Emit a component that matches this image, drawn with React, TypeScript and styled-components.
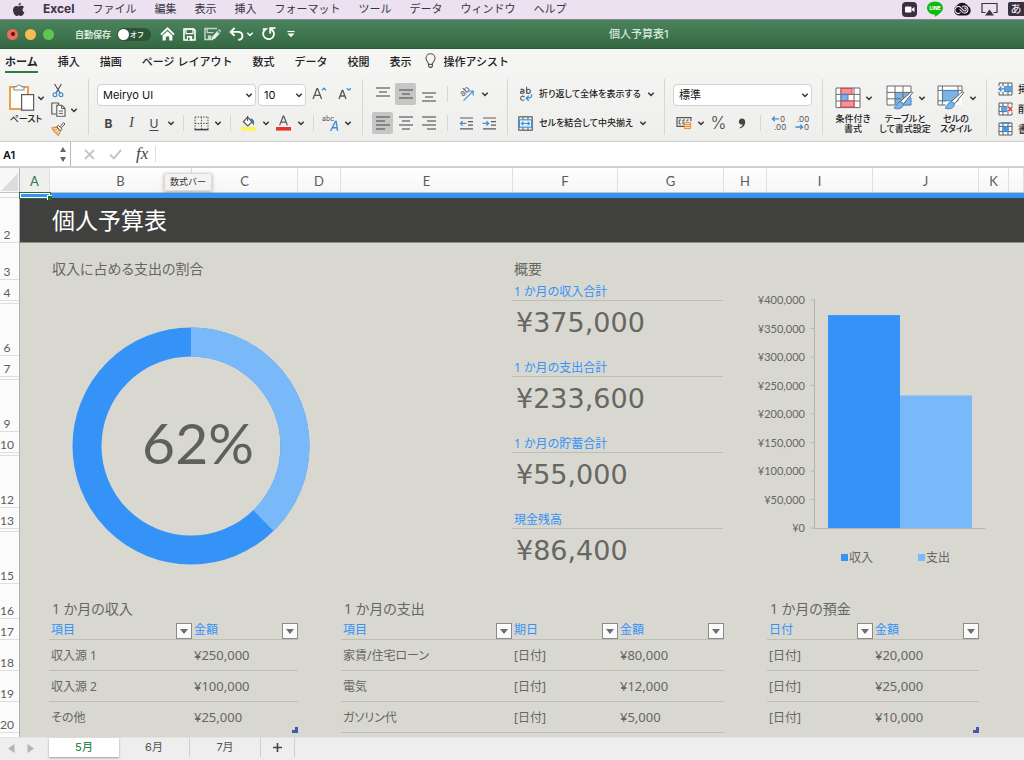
import React from "react";
import styled, { createGlobalStyle } from "styled-components";

const UI_FONT = `Inter, "Noto Sans CJK JP", sans-serif`;
const CELL_FONT = `"Noto Sans", "Noto Sans CJK JP", sans-serif`;
const GEO_FONT = `Lato, "Noto Sans CJK JP", sans-serif`;

const BLUE = "#3592f7";
const LIGHT_BLUE = "#7ab9f9";
const SHEET = "#d8d8d1";
const CELL_TEXT = "#666663";
const RULE = "#bebeb3";
const GREEN = "#2e7a47";

const GlobalStyle = createGlobalStyle`
  *, *::before, *::after { box-sizing: border-box; }
  body {
    margin: 0;
    overflow-x: hidden;
    background: #eeeeee;
    font-family: ${UI_FONT};
    color: #262626;
  }
  button, input, select { font: inherit; color: inherit; }
  svg { display: block; flex: none; overflow: visible; }
`;

const Page = styled.div`
  display: flex;
  flex-direction: column;
  min-height: 100vh;
  overflow: hidden;
`;

/* ---------- system menu bar ---------- */

const MenuBar = styled.header`
  display: flex;
  align-items: center;
  height: 20px;
  padding: 0 0 1px 12px;
  border-bottom: 1px solid #8b8391;
  background: #ebe1f1;
  font-size: 11px;
  line-height: 18px;
  white-space: nowrap;
`;

const MenuNav = styled.nav`
  display: flex;
  gap: 18px;
  margin-left: 18px;
`;

const MenuItem = styled.a<{ $bold?: boolean }>`
  color: #3a3340;
  text-decoration: none;
  font-size: ${(p) => (p.$bold ? 12 : 11)}px;
  font-weight: ${(p) => (p.$bold ? 700 : 400)};
`;

const StatusIcons = styled.div`
  display: flex;
  align-items: center;
  gap: 10px;
  margin-left: auto;
`;

const InputMode = styled.span`
  display: flex;
  justify-content: center;
  width: 16px;
  height: 14px;
  border-radius: 2px 0 0 2px;
  background: #3a3040;
  color: #fff;
  font-size: 11px;
  line-height: 14px;
`;

/* ---------- window title bar ---------- */

const TitleBar = styled.div`
  display: flex;
  align-items: center;
  height: 29px;
  border-bottom: 1px solid #2c5a39;
  background: linear-gradient(#4a845c, #356842);
  color: #fff;
`;

const TitleTools = styled.div`
  display: flex;
  align-items: center;
  flex: 0 0 609px;
  padding-left: 7px;
`;

const Lights = styled.div`
  display: flex;
  gap: 7px;
  width: 68px;
`;

const Light = styled.button<{ $color: string }>`
  display: flex;
  align-items: center;
  justify-content: center;
  width: 11px;
  height: 11px;
  padding: 0;
  border: 0;
  border-radius: 50%;
  background: ${(p) => p.$color};
`;

const LightDot = styled.span`
  width: 4px;
  height: 4px;
  border-radius: 50%;
  background: #5a0b06;
`;

const AutoSave = styled.label`
  display: flex;
  align-items: center;
  gap: 6px;
  font-size: 9px;
  font-weight: 700;
  line-height: 13px;
  color: #dbe8dd;
`;

const Toggle = styled.span`
  position: relative;
  display: flex;
  align-items: center;
  justify-content: flex-end;
  width: 34px;
  height: 13px;
  padding-right: 7px;
  border-radius: 7px;
  background: #2d5439;
  font-size: 7px;
  line-height: 13px;

  &::before {
    content: "";
    position: absolute;
    left: 1px;
    top: 1px;
    width: 11px;
    height: 11px;
    border-radius: 50%;
    background: #fff;
  }
`;

const HiddenCheck = styled.input`
  position: absolute;
  inset: 0;
  margin: 0;
  opacity: 0;
`;

const QuickTools = styled.div`
  display: flex;
  align-items: center;
  gap: 8px;
  margin-left: 9px;
`;

const UndoPair = styled.div`
  display: flex;
  align-items: center;
  gap: 2px;
`;

const PlainButton = styled.button`
  display: flex;
  align-items: center;
  justify-content: center;
  padding: 0;
  border: 0;
  background: none;
`;

const DocTitle = styled.h1`
  margin: 0;
  color: #d7e6da;
  font-size: 11px;
  font-weight: 500;
  line-height: 16px;
  white-space: nowrap;
`;

/* ---------- ribbon ---------- */

const TabRow = styled.div`
  display: flex;
  align-items: flex-start;
  gap: 14px;
  height: 25px;
  padding: 4px 0 0 5px;
  background: #f5f5f4;
  white-space: nowrap;
`;

const TabNav = styled.nav`
  display: flex;
  gap: 20px;
`;

const RibbonTab = styled.a<{ $active?: boolean }>`
  display: flex;
  gap: 7px;
  height: 20px;
  border-bottom: 2px solid ${(p) => (p.$active ? GREEN : "transparent")};
  color: #222;
  font-size: 11px;
  font-weight: ${(p) => (p.$active ? 700 : 500)};
  line-height: 18px;
  text-decoration: none;
`;

const Ribbon = styled.div`
  display: flex;
  height: 67px;
  padding-top: 5px;
  background: linear-gradient(#f4f4f3, #eeeeed);
`;

const Group = styled.section<{ $width: number; $pad: number }>`
  display: flex;
  flex-direction: column;
  flex: 0 0 ${(p) => p.$width}px;
  gap: 7px;
  height: 56px;
  padding: 4px 0 0 ${(p) => p.$pad}px;
  border-right: 1px solid #d6d6d5;
`;

const SplitGroup = styled(Group)`
  flex-direction: row;
  gap: 6px;
`;

const StylesGroup = styled(Group)`
  flex-direction: row;
  gap: 0;
`;

const ToolRow = styled.div<{ $gap?: number }>`
  display: flex;
  align-items: center;
  gap: ${(p) => p.$gap ?? 0}px;
  height: 22px;
`;

const Tool = styled.button<{ $width?: number; $on?: boolean }>`
  display: flex;
  align-items: center;
  justify-content: center;
  flex: none;
  width: ${(p) => p.$width ?? 21}px;
  height: 22px;
  padding: 0;
  border: 0;
  border-radius: 2px;
  background: ${(p) => (p.$on ? "#c6c6c5" : "none")};
`;

const Letter = styled.span<{ $kind: "bold" | "italic" | "underline" | "percent" }>`
  color: #444;
  font-size: ${(p) => (p.$kind === "percent" ? 17 : p.$kind === "italic" ? 14 : 12)}px;
  font-family: ${(p) => (p.$kind === "italic" ? `"Liberation Serif", serif` : UI_FONT)};
  font-weight: ${(p) => (p.$kind === "bold" ? 700 : p.$kind === "percent" ? 300 : 400)};
  font-style: ${(p) => (p.$kind === "italic" ? "italic" : "normal")};
  text-decoration: ${(p) => (p.$kind === "underline" ? "underline" : "none")};
  text-underline-offset: 2px;
`;

const Divider = styled.span`
  width: 1px;
  height: 16px;
  margin: 0 6px;
  background: #d6d6d5;
`;

const SelectBox = styled.label<{ $width: number }>`
  position: relative;
  display: block;
  width: ${(p) => p.$width}px;
  height: 22px;
`;

const NativeSelect = styled.select`
  width: 100%;
  height: 100%;
  padding: 0 16px 0 5px;
  border: 1px solid #d2d2d1;
  border-radius: 4px;
  background: #fff;
  color: #111;
  font-size: 11px;
  appearance: none;
`;

const SelectArrow = styled.span`
  position: absolute;
  right: 3px;
  top: 8px;
  pointer-events: none;
`;

const TextTool = styled.button`
  display: flex;
  align-items: center;
  gap: 6px;
  padding: 0;
  border: 0;
  background: none;
  color: #222;
  font-size: 9px;
  font-weight: 500;
  font-feature-settings: "palt";
  line-height: 22px;
  white-space: nowrap;
`;

const PasteButton = styled.button`
  display: flex;
  flex-direction: column;
  width: 41px;
  height: 45px;
  padding: 0;
  border: 0;
  background: none;
  font-size: 9px;
  font-weight: 500;
  font-feature-settings: "palt";
  line-height: 13px;
`;

const PasteTop = styled.span`
  display: flex;
  align-items: center;
  gap: 2px;
  padding-left: 4px;
`;

const PasteLabel = styled.span`
  padding-left: 3px;
`;

const ClipStack = styled.div`
  display: flex;
  flex-direction: column;
  gap: 4px;
`;

const ClipRow = styled.div`
  display: flex;
  align-items: center;
  gap: 4px;
  height: 15px;
`;

const StyleButton = styled.button<{ $width: number }>`
  display: flex;
  flex-direction: column;
  align-items: center;
  flex: none;
  gap: 4px;
  width: ${(p) => p.$width}px;
  height: 52px;
  padding: 2px 0 0;
  border: 0;
  background: none;
  color: #222;
  font-size: 9px;
  font-weight: 500;
  line-height: 10px;
  white-space: nowrap;
`;

const StyleTop = styled.span`
  display: flex;
  align-items: center;
  gap: 4px;
  height: 25px;
  padding-left: 2px;
`;

const StyleLabel = styled.span`
  font-feature-settings: "palt";
`;

const CellList = styled.section`
  display: flex;
  flex-direction: column;
  flex: 1 0 38px;
  gap: 5px;
  padding: 2px 0 0 11px;
  overflow: hidden;
`;

const CellButton = styled.button`
  display: flex;
  align-items: center;
  gap: 5px;
  height: 15px;
  padding: 0;
  border: 0;
  background: none;
  font-size: 10px;
  font-weight: 500;
  white-space: nowrap;
`;

/* ---------- formula bar ---------- */

const FormulaBar = styled.div`
  display: flex;
  height: 27px;
  border-top: 1px solid #cccccb;
  border-bottom: 2px solid #d0d0cf;
  background: #fff;
`;

const NameBox = styled.div`
  display: flex;
  align-items: center;
  width: 71px;
  padding-right: 3px;
  border-right: 1px solid #b9b9b8;
`;

const NameInput = styled.input`
  flex: 1;
  min-width: 0;
  padding: 2px 0 0 3px;
  border: 0;
  background: none;
  color: #111;
  font-size: 11px;
  font-weight: 600;
`;

const FormulaTools = styled.div`
  display: flex;
  align-items: center;
  gap: 14px;
  padding-left: 13px;
`;

const Fx = styled.span`
  color: #444;
  font-family: "Liberation Serif", serif;
  font-size: 17px;
  font-style: italic;
  font-weight: 400;
  line-height: 20px;
`;

const FormulaInput = styled.input`
  flex: 1;
  min-width: 0;
  height: 16px;
  margin: 4px 0 0 7px;
  border: 0;
  border-left: 1px solid #dededd;
  background: #fff;
`;

/* ---------- sheet ---------- */

const ColumnHeads = styled.div`
  position: relative;
  display: flex;
  height: 25px;
  border-bottom: 1px solid #c4c4c3;
  background: linear-gradient(#ffffff, #f6f6f6);
`;

const Corner = styled.button`
  display: flex;
  align-items: flex-end;
  justify-content: flex-end;
  width: 20px;
  padding: 0 1px 1px 0;
  border: 0;
  border-right: 1px solid #b9b9b8;
  background: #f7f7f7;
`;

const ColumnHead = styled.div<{ $width?: number; $active?: boolean }>`
  flex: ${(p) => (p.$width ? `0 0 ${p.$width}px` : "1 0 0")};
  border-right: 1px solid #e0e0df;
  background: ${(p) => (p.$active ? "#efefee" : "none")};
  color: ${(p) => (p.$active ? GREEN : "#5c5c5c")};
  font-family: ${GEO_FONT};
  font-size: 13px;
  line-height: 26px;
  text-align: center;
`;

const Tooltip = styled.div`
  position: absolute;
  left: 164px;
  top: 5px;
  padding: 0 5px;
  border: 1px solid #dcdcdb;
  background: #f3f3f2;
  box-shadow: 0 1px 4px rgba(0, 0, 0, 0.3);
  color: #333;
  font-size: 9px;
  line-height: 16px;
`;

const SheetBody = styled.div`
  display: flex;
  flex: 1;
`;

const RowHeads = styled.div`
  flex: 0 0 20px;
  width: 20px;
  border-right: 1px solid #b0b0ae;
  background: #fbfbfb;
`;

const RowHead = styled.div<{ $height: number }>`
  display: flex;
  align-items: flex-end;
  justify-content: center;
  height: ${(p) => p.$height}px;
  padding-right: 5px;
  border-bottom: 1px solid #dededd;
  color: #5c5c5c;
  font-family: ${GEO_FONT};
  font-size: 12px;
  line-height: 14px;
`;

const Cells = styled.main`
  flex: 1;
  min-width: 0;
  background: ${SHEET};
  color: ${CELL_TEXT};
  font-family: ${CELL_FONT};
`;

const AccentRow = styled.div`
  position: relative;
  height: 5px;
  background: ${BLUE};
`;

const Selection = styled.div`
  position: absolute;
  left: -1px;
  top: -1px;
  width: 32px;
  height: 7px;
  border: 1px solid #24713e;
  box-shadow: inset 0 0 0 1px #fff;

  &::after {
    content: "";
    position: absolute;
    right: -2px;
    bottom: -2px;
    width: 5px;
    height: 5px;
    border: 1px solid #fff;
    border-width: 1px 0 0 1px;
    background: #24713e;
  }
`;

const SheetTitle = styled.h2`
  height: 45px;
  margin: 0;
  padding-left: 32px;
  border-bottom: 1px solid #8d8d89;
  background: #40403f;
  color: #fff;
  font-size: 23px;
  font-weight: 400;
  line-height: 44px;
`;

const Dashboard = styled.div`
  display: flex;
  height: 341px;
`;

const RatioPanel = styled.section`
  flex: 0 0 492px;
  padding-left: 32px;
`;

const SummaryPanel = styled.section`
  flex: 0 0 211px;
`;

const ChartPanel = styled.section`
  flex: 1;
  padding-top: 37px;
  overflow: hidden;
`;

const PanelTitle = styled.h3<{ $indent?: number }>`
  height: 37px;
  margin: 0;
  padding: 15px 0 0 ${(p) => p.$indent ?? 0}px;
  font-size: 14px;
  font-weight: 400;
  font-feature-settings: "palt";
  line-height: 22px;
`;

const DonutWrap = styled.div`
  padding: 47px 0 0 20px;
`;

const Stat = styled.dl`
  height: 76px;
  margin: 0;
`;

const StatName = styled.dt`
  height: 21px;
  padding-left: 2px;
  border-bottom: 1px solid ${RULE};
  color: ${BLUE};
  font-size: 12px;
  font-feature-settings: "palt";
  line-height: 24px;
`;

const StatValue = styled.dd`
  margin: 0;
  padding-left: 4px;
  font-family: "DejaVu Sans", sans-serif;
  font-size: 27px;
  line-height: 44px;
`;

const Tables = styled.div`
  display: flex;
  gap: 43px;
  padding-left: 29px;
`;

const TableTitle = styled.caption`
  height: 35px;
  padding: 14px 0 0 3px;
  font-size: 14px;
  font-feature-settings: "palt";
  line-height: 21px;
  text-align: left;
`;

const TableBox = styled.div`
  position: relative;
`;

const Table = styled.table<{ $width: number }>`
  width: ${(p) => p.$width}px;
  border-collapse: separate;
  border-spacing: 0;
  table-layout: fixed;
`;

const HeadCell = styled.th<{ $width: number }>`
  width: ${(p) => p.$width}px;
  height: 21px;
  padding: 0 0 0 2px;
  border-bottom: 1px solid ${RULE};
  color: ${BLUE};
  font-size: 12px;
  font-weight: 400;
  line-height: 22px;
  text-align: left;
`;

const HeadInner = styled.div`
  display: flex;
  align-items: flex-start;
  justify-content: space-between;
  height: 20px;
`;

const FilterButton = styled.button`
  display: flex;
  align-items: center;
  justify-content: center;
  width: 16px;
  height: 16px;
  margin-top: 4px;
  padding: 0;
  border: 1px solid #8a8a86;
  background: #fafafa;
`;

const Cell = styled.td<{ $line: boolean; $money: boolean }>`
  height: 31px;
  padding: ${(p) => (p.$money ? 0 : 2)}px 0 0 2px;
  border-bottom: 1px solid ${(p) => (p.$line ? RULE : "transparent")};
  font-size: ${(p) => (p.$money ? 13 : 12)}px;
  font-feature-settings: "palt";
  line-height: 28px;
`;

const TableCorner = styled.span`
  position: absolute;
  right: 0;
  bottom: 0;
  width: 6px;
  height: 6px;
  background: #4258b0;

  &::before {
    content: "";
    position: absolute;
    left: 0;
    top: 0;
    width: 3px;
    height: 3px;
    background: ${SHEET};
  }
`;

/* ---------- sheet tabs ---------- */

const TabBar = styled.footer`
  display: flex;
  align-items: flex-start;
  height: 23px;
  border-top: 1px solid #e3e3e0;
  background: #eeeeee;
`;

const TabArrows = styled.div`
  display: flex;
  gap: 12px;
  width: 49px;
  padding: 6px 0 0 7px;
`;

const SheetTab = styled.button<{ $active?: boolean }>`
  width: ${(p) => (p.$active ? 70 : 71)}px;
  height: 19px;
  padding: 0;
  border: 0;
  border-right: ${(p) => (p.$active ? "0" : "1px solid #cfcfce")};
  background: ${(p) => (p.$active ? "#fff" : "none")};
  box-shadow: ${(p) => (p.$active ? "0 1px 2px rgba(0, 0, 0, 0.35)" : "none")};
  color: ${(p) => (p.$active ? "#2f8a4c" : "#555")};
  font-size: 11px;
  font-weight: ${(p) => (p.$active ? 500 : 400)};
  line-height: 19px;
`;

const AddTab = styled.button`
  display: flex;
  align-items: center;
  justify-content: center;
  width: 34px;
  height: 19px;
  padding: 0;
  border: 0;
  border-right: 1px solid #cfcfce;
  background: none;
`;

/* ---------- icons ---------- */

const Icon = ({ w, h, children }: { w: number; h: number; children: React.ReactNode }) => (
  <svg width={w} height={h} viewBox={`0 0 ${w} ${h}`} fill="none" aria-hidden="true">
    {children}
  </svg>
);

const Chevron = ({ color = "#333" }: { color?: string }) => (
  <Icon w={8} h={8}>
    <path d="M1.3 2.8L4 5.5L6.7 2.8" stroke={color} strokeWidth="1.5" />
  </Icon>
);

const AppleLogo = () => (
  <Icon w={13} h={15}>
    <path
      d="M8.9 0.8C9 2.2 7.7 3.6 6.4 3.6C6.3 2.2 7.5 1 8.9 0.8ZM6.6 4.5C7.2 4.5 8 3.8 9.3 3.8C10.4 3.8 11.4 4.3 12 5.2C9.9 6.4 10.2 9.4 12.4 10.3C11.8 12 10.6 14 9.3 14C8.4 14 8 13.5 6.9 13.5C5.8 13.5 5.3 14 4.5 14C2.9 14 1 10.8 1 8.1C1 5.4 2.7 3.9 4.4 3.9C5.4 3.9 6.1 4.5 6.6 4.5Z"
      fill="#3a3040"
    />
  </Icon>
);

const CameraIcon = () => (
  <Icon w={15} h={15}>
    <rect x="0" y="0" width="15" height="15" rx="4" fill="#3a3040" />
    <rect x="3" y="4.5" width="6.5" height="6" rx="1" fill="#fff" />
    <path d="M10 6.8L12.5 5V10L10 8.3Z" fill="#fff" />
  </Icon>
);

const LineIcon = () => (
  <svg width="16" height="16" viewBox="0 0 16 16" role="img" aria-label="LINE">
    <path d="M8 0.5C12.4 0.5 16 3.3 16 6.9C16 10.4 11.5 13.4 8.4 15.6C7.6 16 7.9 14.8 7.8 13.6C3.5 13.5 0 10.6 0 6.9C0 3.3 3.6 0.5 8 0.5Z" fill="#12b90e" />
    <text x="8" y="8.6" textAnchor="middle" fontFamily="Inter, sans-serif" fontSize="5" fontWeight="800" fill="#fff">
      LINE
    </text>
  </svg>
);

const CloudIcon = () => (
  <Icon w={18} h={14}>
    <path d="M5.4 13.4A5.2 5.2 0 0 1 3.6 3.8A6.8 6.8 0 0 1 15 4A5 5 0 0 1 12.6 13.4Z" fill="#17121c" />
    <g stroke="#ebe1f1" strokeWidth="1.1">
      <path d="M7.6 10.6A3.4 3.4 0 1 1 7.8 5.6L10 7.8" />
      <path d="M6.6 7.4L9.6 10.4A3.4 3.4 0 0 0 15 7.6A3.6 3.6 0 0 0 9 5" />
      <path d="M9.4 7.2L11 8.8A1.5 1.5 0 1 0 11 6.2" />
    </g>
  </Icon>
);

const AirplayIcon = () => (
  <Icon w={17} h={14}>
    <path d="M4.5 10.5H1V1.5H16V10.5H12.5" stroke="#3a3040" strokeWidth="1.2" />
    <path d="M8.5 7.5L13 13.5H4Z" fill="#3a3040" />
  </Icon>
);

const HomeIcon = () => (
  <Icon w={15} h={14}>
    <path d="M1 7.6L7.5 1.4L14 7.6" stroke="#fff" strokeWidth="2" />
    <path d="M2.6 8.6L7.5 4.2L12.4 8.6V13.6H9.2V9.6H5.8V13.6H2.6Z" fill="#fff" />
  </Icon>
);

const SaveIcon = () => (
  <Icon w={13} h={13}>
    <path d="M1 1H10.6L12 2.4V12H1Z" stroke="#fff" strokeWidth="1.6" />
    <path d="M3 1H10V5.6H3Z" stroke="#fff" strokeWidth="1.2" />
    <path d="M3.8 8H9.2V12.4H3.8Z" fill="#fff" />
    <rect x="5" y="9.4" width="1.6" height="3" fill="#3d7049" />
  </Icon>
);

const SavePenIcon = () => (
  <Icon w={17} h={14}>
    <path d="M9 12.5H1V1.5H13" stroke="#c3d6c8" strokeWidth="1.5" />
    <path d="M3.2 2V5.6H9.5" stroke="#c3d6c8" strokeWidth="1.3" />
    <path d="M3.8 8.4H7.4V12.5H3.8Z" fill="#c3d6c8" />
    <path d="M7.4 13L8.4 9.4L13.4 3.8L16 6.2L11 11.8Z" fill="#e4ede6" />
    <path d="M14.2 3L15 2.2L17 4L16.4 5" fill="#e4ede6" />
    <path d="M13 4.6L15.4 6.8" stroke="#3d7049" strokeWidth="0.7" />
  </Icon>
);

const UndoIcon = () => (
  <Icon w={15} h={14}>
    <path d="M5.6 1L1.6 4.9L5.6 8.8" stroke="#fff" strokeWidth="1.9" />
    <path d="M2 4.9H8.6C11.8 4.9 13.4 6.8 13.4 9C13.4 11.4 11.6 12.8 9.2 12.8" stroke="#fff" strokeWidth="1.9" />
  </Icon>
);

const RedoIcon = () => (
  <Icon w={14} h={14}>
    <path d="M0.8 2.2H3.6C1.6 3.6 1 5.4 1.1 7.2A5.5 5.5 0 0 0 12 7.4C12 5 10.8 3.2 8.6 1.8" stroke="#fff" strokeWidth="1.8" />
    <path d="M13.4 1.2H8.2V6.4" stroke="#fff" strokeWidth="1.8" />
  </Icon>
);

const CustomizeIcon = () => (
  <Icon w={14} h={8}>
    <path d="M3.5 1.5H10.5" stroke="#fff" strokeWidth="1.2" />
    <path d="M3.5 3.6H10.5L7 7.2Z" fill="#fff" />
  </Icon>
);

const BulbIcon = () => (
  <Icon w={11} h={16}>
    <path d="M3.6 11.4C3.6 9 1 8.4 1 5.3A4.5 4.5 0 0 1 10 5.3C10 8.4 7.4 9 7.4 11.4Z" stroke="#555" strokeWidth="1.1" />
    <path d="M3.6 11.4V13.2L4.6 14.4H6.4L7.4 13.2V11.4" stroke="#555" strokeWidth="1.1" />
  </Icon>
);

const PasteIcon = () => (
  <Icon w={27} h={29}>
    <path d="M7 4H2V26H13" stroke="#e8a04a" strokeWidth="2" />
    <path d="M15 4H20V11" stroke="#e8a04a" strokeWidth="2" />
    <path d="M3.2 5.2H19V11H12.6V24.8H3.2Z" fill="#fdfdfc" />
    <path d="M6 7V3.6H8.6A2.6 2.6 0 0 1 13.4 3.6H16V7Z" fill="#fff" stroke="#8b8b8a" strokeWidth="1.1" />
    <rect x="13.6" y="11.6" width="12" height="15.6" fill="#fff" stroke="#5a5a5a" strokeWidth="1.2" />
  </Icon>
);

const CutIcon = () => (
  <Icon w={14} h={15}>
    <path d="M3.6 1L9 10M10.4 1L5 10" stroke="#555" strokeWidth="1.2" />
    <circle cx="4" cy="11.8" r="1.9" stroke="#3f8fd2" strokeWidth="1.2" />
    <circle cx="10" cy="11.8" r="1.9" stroke="#3f8fd2" strokeWidth="1.2" />
  </Icon>
);

const CopyIcon = () => (
  <Icon w={15} h={15}>
    <path d="M5.5 12H0.8V1H7.6V3" stroke="#555" strokeWidth="1.1" />
    <path d="M5.8 3.2H10.8L14 6.4V14.2H5.8Z" fill="#fff" stroke="#555" strokeWidth="1.1" />
    <path d="M10.6 3.4V6.6H14M7.8 9H12M7.8 11.4H12" stroke="#555" />
  </Icon>
);

const BrushIcon = () => (
  <Icon w={15} h={15}>
    <path d="M1 7L5.6 6L9.4 10.2L7.4 14.2C4.8 12.4 2.6 10.4 1 7Z" fill="#f9e0c3" stroke="#e58f3c" strokeWidth="1.3" />
    <path d="M2.8 9.2L6 8.4M5 11.8L7.6 10" stroke="#e58f3c" />
    <path d="M5.8 5.8L7.4 4.4L11 8.2L9.5 9.9Z" fill="#fff" stroke="#555" />
    <path d="M9 5.8L12.6 1.6L14 3L10 6.8" fill="#fff" stroke="#555" />
  </Icon>
);

const FontSizeIcon = ({ up }: { up: boolean }) => (
  <Icon w={15} h={16}>
    <path d={up ? "M1 13L5 2.6H5.6L9.6 13M2.5 9.4H8.1" : "M2 13L5.2 4.4H5.8L9 13M3.2 10H7.8"} stroke="#555" strokeWidth="1.3" />
    <path d={up ? "M10 4.2L12 2.2L14 4.2" : "M9.8 2.2L11.8 4.2L13.8 2.2"} stroke="#3f8fd2" strokeWidth="1.3" />
  </Icon>
);

const BorderIcon = () => (
  <Icon w={15} h={15}>
    <path d="M1 1H14M1 7.5H14M1 1V13M14 1V13M7.5 1V13" stroke="#555" strokeDasharray="1.5 1.2" />
    <path d="M0.5 13.6H14.5" stroke="#444" strokeWidth="1.6" />
  </Icon>
);

const FillIcon = () => (
  <Icon w={15} h={16}>
    <path d="M6.6 2.2L11 6.8L6.8 11L2.4 6.8Z" fill="#fff" stroke="#555" strokeWidth="1.2" />
    <path d="M6.6 6V1" stroke="#555" strokeWidth="1.1" />
    <path d="M10 3.8C12.4 4.4 13 6.6 12.6 9.6C11 8.6 11.8 6.4 10 3.8Z" fill="#3f6fa8" stroke="#3f6fa8" />
    <rect x="0" y="12" width="15" height="3.6" fill="#fdf551" />
  </Icon>
);

const FontColorIcon = () => (
  <Icon w={15} h={16}>
    <path d="M3.6 10.4L7.2 1.2H7.8L11.4 10.4M4.9 7.2H10.1" stroke="#555" strokeWidth="1.2" />
    <rect x="0" y="12" width="15" height="3.6" fill="#e8352b" />
  </Icon>
);

const PhoneticIcon = () => (
  <svg width="18" height="17" viewBox="0 0 18 17" aria-hidden="true">
    <text x="0" y="6" fontFamily="Inter, sans-serif" fontSize="7" fill="#555">
      abc
    </text>
    <path d="M8.6 16L13.4 6.4H14.2L15.6 16M10.2 12.8H15" stroke="#3f8fd2" strokeWidth="1.4" fill="none" />
  </svg>
);

const LinesIcon = ({ rows }: { rows: [number, number, number][] }) => (
  <Icon w={14} h={14}>
    {rows.map(([x1, x2, y]) => (
      <path key={y} d={`M${x1} ${y}H${x2}`} stroke="#5c5c5c" strokeWidth="1.2" />
    ))}
  </Icon>
);

const OrientationIcon = () => (
  <svg width="17" height="16" viewBox="0 0 17 16" aria-hidden="true">
    <text x="0" y="0" transform="translate(5 11) rotate(-45)" fontFamily="Inter, sans-serif" fontSize="9" fill="#555">
      ab
    </text>
    <path d="M5.6 14.6L15 5.2M10.6 5H15.2V9.6" stroke="#3f8fd2" strokeWidth="1.2" fill="none" />
  </svg>
);

const IndentIcon = ({ out }: { out: boolean }) => (
  <Icon w={15} h={13}>
    <path d="M1 1H14M9 4.6H14M9 8.2H14M1 11.8H14" stroke="#5c5c5c" strokeWidth="1.2" />
    <path d={out ? "M7.4 6.4H1.4M3.6 4.2L1.4 6.4L3.6 8.6" : "M0.6 6.4H6.6M4.4 4.2L6.6 6.4L4.4 8.6"} stroke="#3f8fd2" strokeWidth="1.3" />
  </Icon>
);

const WrapIcon = () => (
  <Icon w={15} h={16}>
    <g stroke="#555" strokeWidth="1.1">
      <path d="M2.6 4C3.4 2.8 6 2.8 6 4.6V7.4M6 5.2C4 5 2.4 5.4 2.4 6.4C2.4 7.8 5.4 7.6 6 6" />
      <path d="M8.6 0.8V7.4" />
      <ellipse cx="10.4" cy="5.3" rx="1.9" ry="2.1" />
      <path d="M6.4 10.8C5 9.6 2.6 10 2.6 12.2C2.6 14.4 5 14.8 6.4 13.6" />
    </g>
    <path d="M13.4 8.2C14.6 11 12.6 12.4 8.4 12.2M10.8 9.6L8.2 12.2L10.8 14.8" stroke="#3f8fd2" strokeWidth="1.3" />
  </Icon>
);

const MergeIcon = () => (
  <Icon w={15} h={15}>
    <rect x="0.8" y="0.8" width="13.4" height="13.4" stroke="#555" strokeWidth="1.1" />
    <path d="M5 1V3.6M10 1V3.6M5 11.4V14M10 11.4V14" stroke="#555" />
    <rect x="1.4" y="3.8" width="12.2" height="7.4" fill="#e6f2fc" stroke="#3f8fd2" strokeWidth="1.1" />
    <path d="M3.4 7.5H11.6M5.4 5.6L3.4 7.5L5.4 9.4M9.6 5.6L11.6 7.5L9.6 9.4" stroke="#3f8fd2" strokeWidth="1.1" />
  </Icon>
);

const CurrencyIcon = () => (
  <Icon w={16} h={14}>
    <path d="M8 10.4H1V1.6H15V5" stroke="#555" strokeWidth="1.2" />
    <path d="M5 4H3.2V8H5M9 4H7V8H8.4M12.6 4H11V5.4" stroke="#555" />
    <path d="M8.4 6.6H14.6V12.6H8.4Z" fill="#fbe3c8" stroke="#e58f3c" />
    <path d="M8.4 8.6H14.6M8.4 10.6H14.6" stroke="#e58f3c" />
  </Icon>
);

const CommaIcon = () => (
  <Icon w={8} h={11}>
    <path d="M4 0.6C6.2 0.6 7.3 2.1 7.2 4.2C7.1 7.4 5 9.6 2 10.4L1.6 9.5C3.4 8.7 4.4 7.8 4.6 6.5C2.4 6.9 0.9 5.6 0.9 3.7C0.9 1.9 2.2 0.6 4 0.6Z" fill="#444" />
  </Icon>
);

const DecimalIcon = ({ more }: { more: boolean }) => (
  <svg width="16" height="17" viewBox="0 0 16 17" aria-hidden="true" fill="none">
    <text x={more ? 9 : 3} y="7" fontFamily="Inter, sans-serif" fontSize="8" fill="#555">
      {more ? "0" : ".00"}
    </text>
    <text x={more ? 3 : 10} y="15" fontFamily="Inter, sans-serif" fontSize="8" fill="#555">
      {more ? ".00" : "0"}
    </text>
    <path
      d={more ? "M8 3.8H1.4M3.8 1.4L1.4 3.8L3.8 6.2" : "M1.4 12H8.6M6.2 9.6L8.6 12L6.2 14.4"}
      stroke="#3f8fd2"
      strokeWidth="1.3"
    />
  </svg>
);

const ConditionalIcon = () => (
  <Icon w={26} h={22}>
    <rect x="1" y="1" width="24" height="19.6" fill="#fff" />
    <path d="M1 1H25V20.6H1ZM1 7.4H25M1 14H25M6 1V20.6M19 1V20.6" stroke="#6a6a6a" />
    <rect x="6" y="1.4" width="11" height="5.8" fill="#f0959a" stroke="#d8444a" />
    <rect x="6" y="7.6" width="7" height="6" fill="#7fb2e2" stroke="#3f84c6" />
    <rect x="6" y="14" width="13" height="6" fill="#f0959a" stroke="#d8444a" />
  </Icon>
);

const PaintBrush = () => (
  <>
    <path d="M26.8 7.6L17.4 19L14.2 16.6L23.6 8.2C25 7 26.2 6.4 26.8 7.6Z" fill="#fff" stroke="#5a5a5a" />
    <path d="M14 16.8C16.4 16.8 17.8 18.4 17.2 20.4C16.2 23.4 11.8 24.8 8 23C10.6 22 10.4 17.2 14 16.8Z" fill="#7fb2e2" stroke="#3f84c6" />
  </>
);

const TableStyleIcon = () => (
  <Icon w={28} h={25}>
    <rect x="1" y="1" width="24" height="19" fill="#fff" />
    <rect x="9" y="7.4" width="16" height="13" fill="#7fb2e2" />
    <path d="M9 20H1V1H25V8M1 7.4H25M1 13.8H15M9 1V20M17 1V13" stroke="#6a6a6a" />
    <path d="M17 20H25V13" stroke="#3f84c6" />
    <PaintBrush />
  </Icon>
);

const CellStyleIcon = () => (
  <Icon w={28} h={25}>
    <rect x="1" y="1" width="24" height="19" fill="#fff" />
    <path d="M9 20H1V1H25V8M1 5.4H25M5.4 1V20M1 15.8H9M21 1V8" stroke="#6a6a6a" />
    <rect x="5.6" y="5.6" width="15.4" height="10.2" fill="#7fb2e2" stroke="#3f84c6" />
    <PaintBrush />
  </Icon>
);

const CellOpIcon = ({ kind }: { kind: "insert" | "delete" | "format" }) => (
  <Icon w={15} h={14}>
    <path d="M1 1H14V13H1ZM1 4.4H14M1 9.6H14M5 1V13M10 1V13" stroke="#5a5a5a" fill="#fff" />
    {kind === "insert" && (
      <>
        <rect x="0" y="4" width="6" height="6" fill="#f2f2f1" />
        <rect x="6" y="4.2" width="8.4" height="5.4" fill="#5aa3e6" />
        <path d="M7 6.9H1M3.4 4.6L1 6.9L3.4 9.2" stroke="#3f84c6" strokeWidth="1.3" />
      </>
    )}
    {kind === "delete" && (
      <>
        <rect x="3" y="4.4" width="6" height="5" fill="#5aa3e6" />
        <rect x="9.6" y="3.6" width="5.6" height="6.8" fill="#f2f2f1" />
        <path d="M10.2 4.8L14.2 9.2M14.2 4.8L10.2 9.2" stroke="#e03a35" strokeWidth="1.4" />
      </>
    )}
    {kind === "format" && (
      <>
        <path d="M3 1H12" stroke="#3f84c6" strokeWidth="1.4" />
        <rect x="4" y="4.6" width="7" height="5" fill="#4a98e2" />
      </>
    )}
  </Icon>
);

/* ---------- data ---------- */

const MENUS = ["ファイル", "編集", "表示", "挿入", "フォーマット", "ツール", "データ", "ウィンドウ", "ヘルプ"];
const TABS = ["ホーム", "挿入", "描画", "ページ レイアウト", "数式", "データ", "校閲", "表示"];

const COLUMNS: [string, number?][] = [
  ["A", 30],
  ["B", 142],
  ["C", 106],
  ["D", 43],
  ["E", 172],
  ["F", 105],
  ["G", 106],
  ["H", 43],
  ["I", 106],
  ["J", 106],
  ["K", 30],
  [""],
];

const ROWS: [string, number][] = [
  ["", 5],
  ["2", 45],
  ["3", 37],
  ["4", 21],
  ["", 3],
  ["6", 52],
  ["7", 21],
  ["", 3],
  ["9", 52],
  ["10", 21],
  ["", 3],
  ["12", 52],
  ["13", 21],
  ["", 3],
  ["15", 52],
  ["16", 35],
  ["17", 21],
  ["18", 31],
  ["19", 31],
  ["20", 31],
];

const STATS: [string, string][] = [
  ["1 か月の収入合計", "¥375,000"],
  ["1 か月の支出合計", "¥233,600"],
  ["1 か月の貯蓄合計", "¥55,000"],
  ["現金残高", "¥86,400"],
];

type TableData = { title: string; heads: [string, number][]; rows: string[][]; last: boolean };

const TABLES: TableData[] = [
  {
    title: "1 か月の収入",
    heads: [["項目", 143], ["金額", 106]],
    rows: [["収入源 1", "¥250,000"], ["収入源 2", "¥100,000"], ["その他", "¥25,000"]],
    last: true,
  },
  {
    title: "1 か月の支出",
    heads: [["項目", 171], ["期日", 106], ["金額", 106]],
    rows: [
      ["家賃/住宅ローン", "[日付]", "¥80,000"],
      ["電気", "[日付]", "¥12,000"],
      ["ガソリン代", "[日付]", "¥5,000"],
    ],
    last: false,
  },
  {
    title: "1 か月の預金",
    heads: [["日付", 106], ["金額", 106]],
    rows: [["[日付]", "¥20,000"], ["[日付]", "¥25,000"], ["[日付]", "¥10,000"]],
    last: true,
  },
];

/* ---------- parts ---------- */

const Donut = () => {
  const r = 104;
  const length = 2 * Math.PI * r;
  const spare = length * 0.377;
  return (
    <svg width="238" height="238" viewBox="0 0 238 238" role="img" aria-label="収入に占める支出の割合 62%">
      <g transform="rotate(-90 119 119)" fill="none" strokeWidth="29">
        <circle cx="119" cy="119" r={r} stroke={BLUE} />
        <circle cx="119" cy="119" r={r} stroke={LIGHT_BLUE} strokeDasharray={`${spare} ${length}`} />
      </g>
      <text x="126" y="137" textAnchor="middle" fontFamily="Lato, sans-serif" fontSize="57" fill="#5f5f5d">
        62%
      </text>
    </svg>
  );
};

const BarChart = () => {
  const ticks = [400, 350, 300, 250, 200, 150, 100, 50, 0];
  const y = (v: number) => 248 - (v / 400) * 228;
  return (
    <svg width="270" height="300" viewBox="0 0 270 300" role="img" aria-label="収入と支出">
      {ticks.map((t) => (
        <g key={t}>
          <text x="82" y={y(t) + 4} textAnchor="end" fontFamily="Lato, sans-serif" fontSize="11" fill={CELL_TEXT}>
            {t ? `¥${t},000` : "¥0"}
          </text>
          <path d={`M88 ${y(t)}H92`} stroke="#b4b4aa" />
        </g>
      ))}
      <rect x="105" y={y(373.5)} width="72" height={248 - y(373.5)} fill={BLUE} />
      <rect x="177" y={y(232.5)} width="72" height={248 - y(232.5)} fill={LIGHT_BLUE} />
      <path d="M91.5 20V248.5H262" stroke="#b4b4aa" fill="none" />
      <rect x="118" y="274" width="7" height="7" fill={BLUE} />
      <rect x="195" y="274" width="7" height="7" fill={LIGHT_BLUE} />
      <g fontFamily='"Noto Sans CJK JP", sans-serif' fontSize="12" fill={CELL_TEXT}>
        <text x="126" y="282">収入</text>
        <text x="203" y="282">支出</text>
      </g>
    </svg>
  );
};

const Picker = ({ label, value, width }: { label: string; value: string; width: number }) => (
  <SelectBox $width={width}>
    <NativeSelect aria-label={label} defaultValue={value}>
      <option>{value}</option>
    </NativeSelect>
    <SelectArrow>
      <Chevron />
    </SelectArrow>
  </SelectBox>
);

const Drop = ({ label }: { label: string }) => (
  <Tool $width={12} aria-label={label}>
    <Chevron />
  </Tool>
);

const BudgetTable = ({ title, heads, rows, last }: TableData) => (
  <TableBox>
    <Table $width={heads.reduce((sum, h) => sum + h[1], 0)}>
      <TableTitle>{title}</TableTitle>
      <thead>
        <tr>
          {heads.map(([name, width]) => (
            <HeadCell key={name} $width={width} scope="col">
              <HeadInner>
                {name}
                <FilterButton aria-label={`${name}のフィルター`}>
                  <Icon w={8} h={5}>
                    <path d="M0 0H8L4 5Z" fill="#6e6e6c" />
                  </Icon>
                </FilterButton>
              </HeadInner>
            </HeadCell>
          ))}
        </tr>
      </thead>
      <tbody>
        {rows.map((row, r) => (
          <tr key={r}>
            {row.map((value, c) => (
              <Cell key={c} $line={!last || r < rows.length - 1} $money={value.startsWith("¥")}>
                {value}
              </Cell>
            ))}
          </tr>
        ))}
      </tbody>
    </Table>
    {last && <TableCorner />}
  </TableBox>
);

export default function App() {
  return (
    <Page lang="ja">
      <GlobalStyle />
      <MenuBar>
        <AppleLogo />
        <MenuNav>
          <MenuItem href="#excel" $bold>
            Excel
          </MenuItem>
          {MENUS.map((m) => (
            <MenuItem key={m} href="#menu">
              {m}
            </MenuItem>
          ))}
        </MenuNav>
        <StatusIcons>
          <CameraIcon />
          <LineIcon />
          <CloudIcon />
          <AirplayIcon />
          <InputMode>あ</InputMode>
        </StatusIcons>
      </MenuBar>

      <TitleBar>
        <TitleTools>
          <Lights>
            <Light $color="#ee6a5f" aria-label="閉じる">
              <LightDot />
            </Light>
            <Light $color="#f5bd4f" aria-label="しまう" />
            <Light $color="#61c554" aria-label="フルスクリーン" />
          </Lights>
          <AutoSave>
            自動保存
            <Toggle>
              <HiddenCheck type="checkbox" />
              オフ
            </Toggle>
          </AutoSave>
          <QuickTools>
            <PlainButton aria-label="ホーム"><HomeIcon /></PlainButton>
            <PlainButton aria-label="保存"><SaveIcon /></PlainButton>
            <PlainButton aria-label="名前を付けて保存"><SavePenIcon /></PlainButton>
            <UndoPair>
              <PlainButton aria-label="元に戻す"><UndoIcon /></PlainButton>
              <PlainButton aria-label="元に戻す一覧"><Chevron color="#fff" /></PlainButton>
            </UndoPair>
            <PlainButton aria-label="やり直し"><RedoIcon /></PlainButton>
            <PlainButton aria-label="カスタマイズ"><CustomizeIcon /></PlainButton>
          </QuickTools>
        </TitleTools>
        <DocTitle>個人予算表1</DocTitle>
      </TitleBar>

      <TabRow>
        <TabNav>
          {TABS.map((t, i) => (
            <RibbonTab key={t} href="#tab" $active={i === 0}>
              {t}
            </RibbonTab>
          ))}
        </TabNav>
        <RibbonTab href="#assist">
          <BulbIcon />
          操作アシスト
        </RibbonTab>
      </TabRow>

      <Ribbon>
        <SplitGroup $width={89} $pad={4}>
          <PasteButton>
            <PasteTop>
              <PasteIcon />
              <Chevron />
            </PasteTop>
            <PasteLabel>ペースト</PasteLabel>
          </PasteButton>
          <ClipStack>
            <ClipRow>
              <PlainButton aria-label="切り取り"><CutIcon /></PlainButton>
            </ClipRow>
            <ClipRow>
              <PlainButton aria-label="コピー"><CopyIcon /></PlainButton>
              <Chevron />
            </ClipRow>
            <ClipRow>
              <PlainButton aria-label="書式のコピー"><BrushIcon /></PlainButton>
            </ClipRow>
          </ClipStack>
        </SplitGroup>

        <Group $width={274} $pad={8}>
          <ToolRow $gap={2}>
            <Picker label="フォント" value="Meiryo UI" width={159} />
            <Picker label="フォント サイズ" value="10" width={48} />
            <Tool $width={23} aria-label="フォント サイズの拡大"><FontSizeIcon up /></Tool>
            <Tool $width={23} aria-label="フォント サイズの縮小"><FontSizeIcon up={false} /></Tool>
          </ToolRow>
          <ToolRow>
            <Tool $width={23}><Letter $kind="bold">B</Letter></Tool>
            <Tool $width={23}><Letter $kind="italic">I</Letter></Tool>
            <Tool $width={22}><Letter $kind="underline">U</Letter></Tool>
            <Drop label="下線の種類" />
            <Divider />
            <Tool $width={22} aria-label="罫線"><BorderIcon /></Tool>
            <Drop label="罫線の種類" />
            <Divider />
            <Tool $width={23} aria-label="塗りつぶしの色"><FillIcon /></Tool>
            <Drop label="塗りつぶしの色一覧" />
            <Tool $width={23} aria-label="フォントの色"><FontColorIcon /></Tool>
            <Drop label="フォントの色一覧" />
            <Divider />
            <Tool $width={22} aria-label="ふりがな"><PhoneticIcon /></Tool>
            <Drop label="ふりがなの設定" />
          </ToolRow>
        </Group>

        <Group $width={145} $pad={9}>
          <ToolRow $gap={2}>
            <Tool aria-label="上揃え"><LinesIcon rows={[[0, 14, 1], [3, 11, 5], [0, 14, 9]]} /></Tool>
            <Tool $on aria-label="上下中央揃え"><LinesIcon rows={[[0, 14, 3], [3, 11, 7], [0, 14, 11]]} /></Tool>
            <Tool aria-label="下揃え"><LinesIcon rows={[[0, 14, 6], [3, 11, 10], [0, 14, 14]]} /></Tool>
            <Divider />
            <Tool aria-label="方向"><OrientationIcon /></Tool>
            <Drop label="方向の一覧" />
          </ToolRow>
          <ToolRow $gap={2}>
            <Tool $on aria-label="左揃え"><LinesIcon rows={[[0, 14, 1], [0, 9, 5], [0, 14, 9], [0, 9, 13]]} /></Tool>
            <Tool aria-label="中央揃え"><LinesIcon rows={[[0, 14, 1], [3, 11, 5], [0, 14, 9], [3, 11, 13]]} /></Tool>
            <Tool aria-label="右揃え"><LinesIcon rows={[[0, 14, 1], [5, 14, 5], [0, 14, 9], [5, 14, 13]]} /></Tool>
            <Divider />
            <Tool aria-label="インデントを減らす"><IndentIcon out /></Tool>
            <Tool aria-label="インデントを増やす"><IndentIcon out={false} /></Tool>
          </ToolRow>
        </Group>

        <Group $width={157} $pad={10}>
          <ToolRow>
            <TextTool>
              <WrapIcon />
              折り返して全体を表示する
              <Chevron />
            </TextTool>
          </ToolRow>
          <ToolRow>
            <TextTool>
              <MergeIcon />
              セルを結合して中央揃え
              <Chevron />
            </TextTool>
          </ToolRow>
        </Group>

        <Group $width={158} $pad={8}>
          <ToolRow>
            <Picker label="表示形式" value="標準" width={139} />
          </ToolRow>
          <ToolRow>
            <Tool $width={22} aria-label="通貨"><CurrencyIcon /></Tool>
            <Drop label="通貨の一覧" />
            <Tool $width={23}><Letter $kind="percent">%</Letter></Tool>
            <Tool $width={24} aria-label="桁区切り"><CommaIcon /></Tool>
            <Divider />
            <Tool $width={23} aria-label="小数点以下の桁数を増やす"><DecimalIcon more /></Tool>
            <Tool $width={24} aria-label="小数点以下の桁数を減らす"><DecimalIcon more={false} /></Tool>
          </ToolRow>
        </Group>

        <StylesGroup $width={164} $pad={4}>
          <StyleButton $width={52}>
            <StyleTop>
              <ConditionalIcon />
              <Chevron />
            </StyleTop>
            <StyleLabel>
              条件付き
              <br />
              書式
            </StyleLabel>
          </StyleButton>
          <StyleButton $width={52}>
            <StyleTop>
              <TableStyleIcon />
              <Chevron />
            </StyleTop>
            <StyleLabel>
              テーブルと
              <br />
              して書式設定
            </StyleLabel>
          </StyleButton>
          <StyleButton $width={50}>
            <StyleTop>
              <CellStyleIcon />
              <Chevron />
            </StyleTop>
            <StyleLabel>
              セルの
              <br />
              スタイル
            </StyleLabel>
          </StyleButton>
        </StylesGroup>

        <CellList>
          <CellButton><CellOpIcon kind="insert" />挿入</CellButton>
          <CellButton><CellOpIcon kind="delete" />削除</CellButton>
          <CellButton><CellOpIcon kind="format" />書式</CellButton>
        </CellList>
      </Ribbon>

      <FormulaBar>
        <NameBox>
          <NameInput aria-label="名前ボックス" defaultValue="A1" />
          <PlainButton aria-label="名前の一覧">
            <Icon w={8} h={15}>
              <path d="M4 0L7 5H1ZM4 15L7 10H1Z" fill="#666" />
            </Icon>
          </PlainButton>
        </NameBox>
        <FormulaTools>
          <PlainButton aria-label="キャンセル">
            <Icon w={11} h={11}>
              <path d="M1 1L10 10M10 1L1 10" stroke="#c4c4c3" strokeWidth="1.8" />
            </Icon>
          </PlainButton>
          <PlainButton aria-label="入力">
            <Icon w={13} h={11}>
              <path d="M1 5.6L4.8 9.4L12 1" stroke="#c4c4c3" strokeWidth="2" />
            </Icon>
          </PlainButton>
          <PlainButton aria-label="関数の挿入">
            <Fx>fx</Fx>
          </PlainButton>
        </FormulaTools>
        <FormulaInput aria-label="数式バー" />
      </FormulaBar>

      <ColumnHeads>
        <Corner aria-label="すべて選択">
          <Icon w={17} h={18}>
            <path d="M17 0V18H0Z" fill="#dcdcdb" />
          </Icon>
        </Corner>
        {COLUMNS.map(([name, width]) => (
          <ColumnHead key={name} $width={width} $active={name === "A"}>
            {name}
          </ColumnHead>
        ))}
        <Tooltip role="tooltip">数式バー</Tooltip>
      </ColumnHeads>

      <SheetBody>
        <RowHeads>
          {ROWS.map(([name, height], i) => (
            <RowHead key={i} $height={height}>
              {name}
            </RowHead>
          ))}
        </RowHeads>
        <Cells>
          <AccentRow>
            <Selection />
          </AccentRow>
          <SheetTitle>個人予算表</SheetTitle>
          <Dashboard>
            <RatioPanel>
              <PanelTitle>収入に占める支出の割合</PanelTitle>
              <DonutWrap>
                <Donut />
              </DonutWrap>
            </RatioPanel>
            <SummaryPanel>
              <PanelTitle $indent={2}>概要</PanelTitle>
              {STATS.map(([name, value]) => (
                <Stat key={name}>
                  <StatName>{name}</StatName>
                  <StatValue>{value}</StatValue>
                </Stat>
              ))}
            </SummaryPanel>
            <ChartPanel>
              <BarChart />
            </ChartPanel>
          </Dashboard>
          <Tables>
            {TABLES.map((t) => (
              <BudgetTable key={t.title} {...t} />
            ))}
          </Tables>
        </Cells>
      </SheetBody>

      <TabBar>
        <TabArrows>
          <PlainButton aria-label="前のシート">
            <Icon w={8} h={9}>
              <path d="M7.5 0V9L1 4.5Z" fill="#b4b4b3" />
            </Icon>
          </PlainButton>
          <PlainButton aria-label="次のシート">
            <Icon w={8} h={9}>
              <path d="M0.5 0V9L7 4.5Z" fill="#b4b4b3" />
            </Icon>
          </PlainButton>
        </TabArrows>
        <SheetTab $active>5月</SheetTab>
        <SheetTab>6月</SheetTab>
        <SheetTab>7月</SheetTab>
        <AddTab aria-label="シートの追加">
          <Icon w={9} h={9}>
            <path d="M4.5 0V9M0 4.5H9" stroke="#444" strokeWidth="1.6" />
          </Icon>
        </AddTab>
      </TabBar>
    </Page>
  );
}
